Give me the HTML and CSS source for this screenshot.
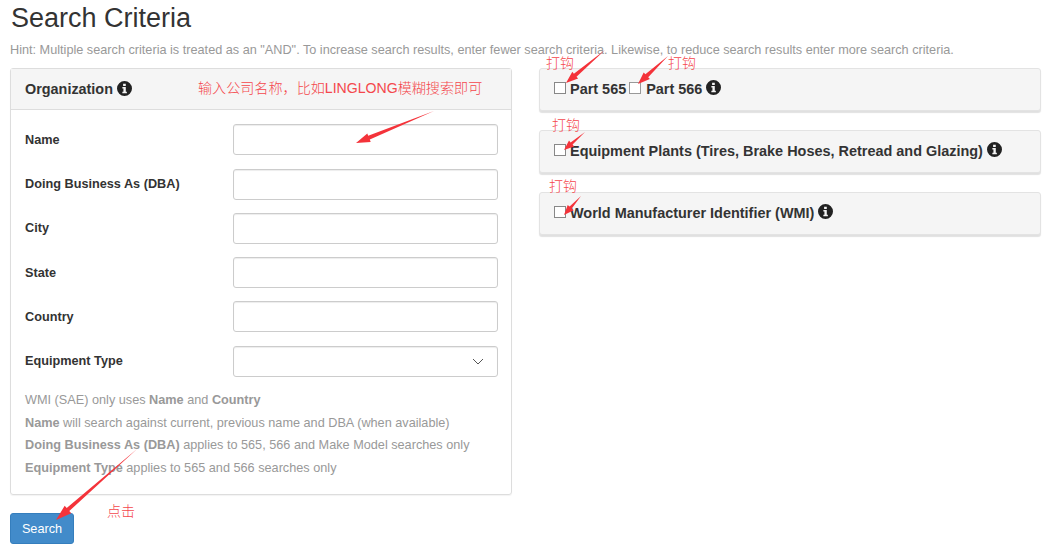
FILE: index.html
```html
<!DOCTYPE html>
<html lang="en">
<head>
<meta charset="utf-8">
<title>Search Criteria</title>
<link rel="stylesheet" href="styles.css">
</head>
<body>
<svg class="sprite" width="0" height="0" aria-hidden="true">
  <symbol id="info" viewBox="0 0 14 14">
    <path fill-rule="evenodd" d="M7 0a7 7 0 1 0 0 14A7 7 0 0 0 7 0zM5.7 2.6h2.500v2H5.700zM5 5.700h3.200v4.400h1v1.400H5v-1.400h1V7.100H5z"/>
  </symbol>
</svg>
<main class="page">
  <h1 class="title">Search Criteria</h1>
  <p class="hint">Hint: Multiple search criteria is treated as an "AND". To increase search results, enter fewer search criteria. Likewise, to reduce search results enter more search criteria.</p>
  <div class="columns">
    <section class="panel">
      <header class="panel-head">Organization <svg class="info"><use href="#info"/></svg></header>
      <div class="panel-body">
        <div class="row"><label class="row-label">Name</label><input class="field" type="text"></div>
        <div class="row"><label class="row-label">Doing Business As (DBA)</label><input class="field" type="text"></div>
        <div class="row"><label class="row-label">City</label><input class="field" type="text"></div>
        <div class="row"><label class="row-label">State</label><input class="field" type="text"></div>
        <div class="row"><label class="row-label">Country</label><input class="field" type="text"></div>
        <div class="row"><label class="row-label">Equipment Type</label>
          <div class="field select"><svg class="chevron" viewBox="0 0 12 7"><path d="M1 1l5 5 5-5" fill="none" stroke="#555" stroke-width="1"/></svg></div>
        </div>
        <div class="notes">
          <p>WMI (SAE) only uses <b>Name</b> and <b>Country</b></p>
          <p><b>Name</b> will search against current, previous name and DBA (when available)</p>
          <p><b>Doing Business As (DBA)</b> applies to 565, 566 and Make Model searches only</p>
          <p><b>Equipment Type</b> applies to 565 and 566 searches only</p>
        </div>
      </div>
    </section>
    <div class="stack">
      <section class="well"><input class="check" type="checkbox"><span>Part 565</span><input class="check check-second" type="checkbox"><span>Part 566</span> <svg class="info"><use href="#info"/></svg></section>
      <section class="well"><input class="check" type="checkbox"><span>Equipment Plants (Tires, Brake Hoses, Retread and Glazing)</span> <svg class="info"><use href="#info"/></svg></section>
      <section class="well"><input class="check" type="checkbox"><span>World Manufacturer Identifier (WMI)</span> <svg class="info"><use href="#info"/></svg></section>
    </div>
  </div>
  <button class="btn" type="button">Search</button>
</main>

<svg class="arrows" width="1044" height="545" aria-hidden="true">
  <polygon points="434,111 369.800,139.600 370.700,141.900 356,143 367.300,133.500 368.200,135.800"/>
  <polygon points="137,449 69.300,511 71.300,513.300 56,520 64.700,505.700 66.700,508"/>
  <polygon points="605,50 576.500,76.700 578.100,78.600 566,83 572.300,71.800 573.900,73.700"/>
  <polygon points="668,56 648.200,77.300 649.900,79.100 638,84 643.700,72.500 645.400,74.300"/>
  <polygon points="585,132 572.600,144.600 574.200,146.500 564,150 569,140.500 570.600,142.400"/>
  <polygon points="581,196 571.800,208.600 573.700,210.300 564,215 567.700,204.900 569.600,206.600"/>
</svg>
<span class="note-cn note-org">输入公司名称，比如LINGLONG模糊搜索即可</span>
<span class="note-cn note-a">打钩</span>
<span class="note-cn note-b">打钩</span>
<span class="note-cn note-c">打钩</span>
<span class="note-cn note-d">打钩</span>
<span class="note-cn note-e">点击</span>
</body>
</html>
```
FILE: styles.css
```css
* { box-sizing: border-box; }
html, body { margin: 0; padding: 0; }
body {
  position: relative;
  width: 1044px;
  height: 545px;
  overflow: hidden;
  background: #fff;
  color: #333;
  font: 12.7px/1.43 "Liberation Sans", Arial, sans-serif;
}
.sprite { position: absolute; }
.page { padding: 0 4px 0 10px; }
.title {
  margin: 0 0 0 1px;
  padding-top: 2px;
  font-size: 27px;
  font-weight: 400;
  line-height: 33px;
}
.hint {
  margin: 6px 0 0;
  height: 18px;
  line-height: 18px;
  color: #999;
  white-space: nowrap;
}
.columns {
  display: grid;
  grid-template-columns: 502px 502px;
  column-gap: 27px;
  margin-top: 9px;
}
.panel {
  height: 427px;
  border: 1px solid #ddd;
  border-radius: 3px;
  box-shadow: 0 1px 1px rgba(0,0,0,.05);
}
.panel-head {
  display: flex;
  align-items: center;
  gap: 4px;
  height: 41px;
  padding: 0 14px;
  background: #f5f5f5;
  border-bottom: 1px solid #ddd;
  font-size: 14.4px;
  font-weight: 700;
}
.info { width: 15px; height: 15px; fill: #222; flex: none; }
.panel-head .info { margin-top: -2px; }
.panel-body { padding: 14.400px 13px 0 14px; }
.row {
  display: flex;
  align-items: center;
  height: 30.800px;
  margin-bottom: 13.500px;
}
.row-label { width: 208px; font-weight: 700; }
.field {
  display: block;
  width: 265px;
  height: 31px;
  padding: 0 10px;
  background: #fff;
  border: 1px solid #ccc;
  border-radius: 3px;
  box-shadow: inset 0 1px 1px rgba(0,0,0,.075);
}
.select { display: flex; align-items: center; justify-content: flex-end; }
.chevron { width: 12px; height: 7px; margin-right: 3px; }
.notes { margin-top: -1.200px; color: #999; }
.notes p { margin: 0; height: 22.600px; line-height: 22.600px; }
.stack { display: flex; flex-direction: column; gap: 19px; }
.well {
  display: flex;
  align-items: flex-start;
  height: 43px;
  padding: 11px 14px 0;
  background: #f5f5f5;
  border: 1px solid #e3e3e3;
  border-radius: 3px;
  box-shadow: 0 2px 1px rgba(0,0,0,.12);
  font-size: 14.440px;
  line-height: 18px;
  font-weight: 700;
}
.well .info { margin: 0 0 0 4px; }
.check {
  appearance: none;
  flex: none;
  width: 12px;
  height: 12px;
  margin: 2px 4px 0 0;
  background: #fff;
  border: 1px solid #888;
}
.check-second { margin: 2px 5px 0 3px; border-color: #999; }
.btn {
  display: block;
  width: 64px;
  height: 31px;
  margin-top: 18px;
  padding: 0;
  background: #428bca;
  border: 1px solid #357ebd;
  border-radius: 3px;
  color: #fff;
  font: 12.7px "Liberation Sans", Arial, sans-serif;
}
.arrows { position: absolute; left: 0; top: 0; pointer-events: none; }
.arrows polygon { fill: #f4333a; }
.note-cn {
  position: absolute;
  color: #f4474c;
  font: 300 14px/18px "Liberation Sans", "Noto Sans CJK SC", sans-serif;
  white-space: nowrap;
}
.note-org { left: 198px; top: 79px; font-size: 14.100px; }
.note-a { left: 546px; top: 54px; }
.note-b { left: 668px; top: 54px; }
.note-c { left: 552px; top: 116px; }
.note-d { left: 549px; top: 177px; }
.note-e { left: 107px; top: 502px; }
```
